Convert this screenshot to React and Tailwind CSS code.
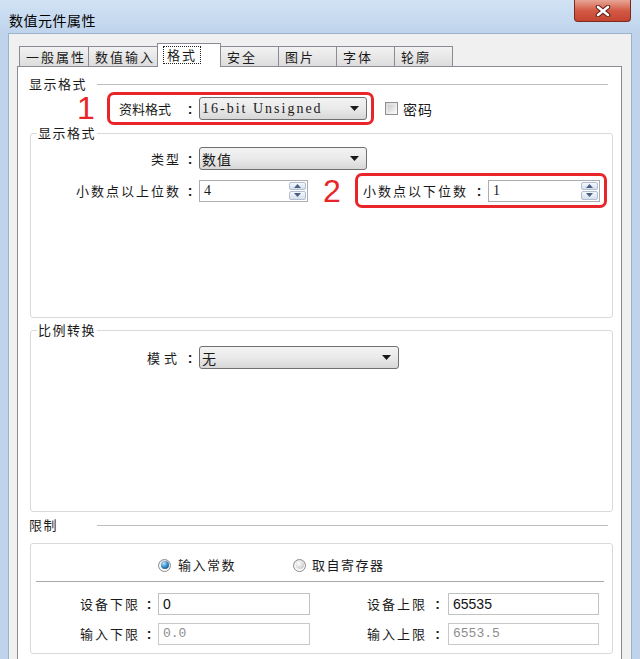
import React from "react";

// Win7 style "数值元件属性" dialog, 格式 tab

const TABS = ["一般属性", "数值输入", "格式", "安全", "图片", "字体", "轮廓"];
const TAB_WIDTHS = ["w-[70px]", "w-[70px]", "w-[64px]", "w-[59px]", "w-[59px]", "w-[59px]", "w-[59px]"];

function Colon({ w = "w-[18px]" }) {
  return (
    <span className={`${w} shrink-0 text-center text-[14px] font-bold leading-[16px] [font-family:'Liberation_Sans',sans-serif]`}>
      :
    </span>
  );
}

function Arrow() {
  return (
    <svg width="9" height="5" viewBox="0 0 9 5" className="shrink-0">
      <path d="M0 0 H9 L4.5 5 Z" fill="#1a1a1a" />
    </svg>
  );
}

function Dropdown({ w, children, mono }) {
  return (
    <div
      className={`${w} h-[23px] shrink-0 rounded-[3px] border border-[#707070] bg-gradient-to-b from-[#f3f3f3] via-[#eaeaea] to-[#d7d7d7] flex items-center pl-[2px] pr-[7px]`}
    >
      <span
        className={
          mono
            ? "flex-1 text-[14px] leading-[16px] tracking-[2px] [font-family:'Liberation_Serif',serif]"
            : "flex-1 text-[14px] leading-[16px] tracking-[1px]"
        }
      >
        {children}
      </span>
      <Arrow />
    </div>
  );
}

function SpinButton({ up }) {
  return (
    <div className="flex-1 rounded-[2px] border border-[#b3bfd0] bg-gradient-to-b from-[#f5f8fc] to-[#d6e0ed] flex items-center justify-center">
      <svg width="7" height="4" viewBox="0 0 7 4">
        <path d={up ? "M0 4 L3.5 0 L7 4 Z" : "M0 0 H7 L3.5 4 Z"} fill="#4b5f80" />
      </svg>
    </div>
  );
}

function SpinField({ w, value }) {
  return (
    <div className={`${w} h-[22px] shrink-0 border border-[#abadb3] bg-white flex items-stretch`}>
      <span className="flex-1 pl-[4px] self-center text-[14px] leading-[16px] [font-family:'Liberation_Serif',serif]">
        {value}
      </span>
      <div className="w-[19px] flex flex-col gap-px p-px">
        <SpinButton up />
        <SpinButton />
      </div>
    </div>
  );
}

function TextField({ w, value, disabled }) {
  return (
    <div
      className={
        disabled
          ? `${w} h-[22px] shrink-0 border border-[#c9c9c9] bg-white flex items-center pl-[4px] text-[13px] text-[#8d8d8d] [font-family:'Liberation_Mono',monospace]`
          : `${w} h-[22px] shrink-0 border border-[#c2c2c2] bg-white flex items-center pl-[4px] text-[14px] text-[#111] [font-family:'Liberation_Sans',sans-serif]`
      }
    >
      {value}
    </div>
  );
}

function Header({ children }) {
  return (
    <div className="flex items-center h-[16px] pl-[11px] pr-[13px]">
      <span className="w-[68px] shrink-0 text-[13px] leading-[16px] tracking-[1.5px]">{children}</span>
      <div className="flex-1 h-px bg-[#bdbdbd]" />
    </div>
  );
}

function RedDigit({ children }) {
  return (
    <span className="block text-[32px] leading-[28px] text-[#e8262a] [font-family:'Liberation_Sans',sans-serif]">
      {children}
    </span>
  );
}

function Radio({ checked }) {
  return (
    <div className="w-[13px] h-[13px] shrink-0 rounded-full border border-[#8b8b8b] bg-gradient-to-b from-[#e4e4e4] to-[#ffffff] flex items-center justify-center">
      {checked ? (
        <div className="w-[8px] h-[8px] rounded-full bg-[radial-gradient(circle_at_35%_30%,#bfe6fb,#2f88c6_50%,#0b3e6e)]" />
      ) : (
        <div className="w-[8px] h-[8px] rounded-full bg-[radial-gradient(circle_at_35%_30%,#ffffff,#d6d6d6_60%,#bcbcbc)]" />
      )}
    </div>
  );
}

function CloseButton() {
  return (
    <div className="absolute right-[9px] top-0 w-[57px] h-[22px] rounded-b-[4px] border border-t-0 border-[#7a2a1e] bg-gradient-to-b from-[#e6a595] via-[#d35a45] to-[#c54432] flex items-center justify-center">
      <svg width="16" height="12" viewBox="0 0 16 12">
        <path d="M3 2 L13 10 M13 2 L3 10" stroke="#5a1c13" strokeWidth="4.5" strokeLinecap="round" />
        <path d="M3 2 L13 10 M13 2 L3 10" stroke="#ffffff" strokeWidth="2.6" strokeLinecap="round" />
      </svg>
    </div>
  );
}

export default function App() {
  return (
    <div className="w-[640px] h-[659px] overflow-hidden relative bg-[#bfd4ec] text-[#1a1a1a] [font-family:'Noto_Sans_CJK_SC','Noto_Sans',sans-serif]">
      <div className="h-[33px] flex items-center pl-[9px] pt-[7px] bg-gradient-to-b from-[#d2e2f4] to-[#bed4ec]">
        <span className="text-[14px] leading-[18px] tracking-[0.5px] text-black">数值元件属性</span>
      </div>
      <CloseButton />

      <div className="ml-[8px] w-[624px] h-[626px] bg-[#f0f0f0] border-t border-x border-[#9cb1ca]">
        {/* tabs */}
        <div className="h-[32px] flex items-end pl-[10px]">
          {TABS.map((t, i) =>
            i === 2 ? (
              <div
                key={t}
                className={`${TAB_WIDTHS[i]} -ml-px -mb-px h-[24px] relative z-10 bg-white border-t border-x border-[#898c95] flex items-start pt-[2px] pl-[5px]`}
              >
                <span className="border border-dotted border-[#222] px-[3px] text-[13px] leading-[16px] tracking-[2px]">
                  {t}
                </span>
              </div>
            ) : (
              <div
                key={t}
                className={`${TAB_WIDTHS[i]} ${i === 0 ? "" : "-ml-px"} h-[20px] border-t border-x border-[#898c95] bg-gradient-to-b from-[#f2f2f2] to-[#dddddd] flex items-center pl-[6px]`}
              >
                <span className="text-[13px] leading-[16px] tracking-[2px]">{t}</span>
              </div>
            )
          )}
        </div>

        {/* page */}
        <div className="ml-[8px] w-[605px] h-[600px] border border-[#898c95] bg-white">
          <div className="h-[9px]" />
          <Header>显示格式</Header>

          <div className="flex items-center h-[33px]">
            <div className="w-[89px] shrink-0 pl-[59px] pb-[1px]">
              <RedDigit>1</RedDigit>
            </div>
            <div className="w-[267px] h-[33px] shrink-0 rounded-[7px] border-[3px] border-[#e8262a] flex items-center pl-[9px]">
              <span className="w-[62px] shrink-0 text-[13px] leading-[16px]">资料格式</span>
              <Colon />
              <Dropdown w="w-[168px]" mono>
                16-bit Unsigned
              </Dropdown>
            </div>
            <div className="ml-[11px] w-[13px] h-[13px] border border-[#8e8f8f] bg-gradient-to-br from-[#d9d9d9] to-[#fbfbfb] p-[2px]">
              <div className="w-full h-full bg-gradient-to-br from-[#cdcdcd] to-[#f3f3f3]" />
            </div>
            <span className="ml-[5px] text-[14px] leading-[16px] tracking-[1px]">密码</span>
          </div>

          <fieldset className="ml-[12px] w-[583px] h-[193px] border border-[#d9d9d9] rounded-[3px]">
            <legend className="ml-[6px] px-[1px] text-[13px] leading-[16px] tracking-[1.5px]">显示格式</legend>
            <div className="flex items-center mt-[6px] h-[23px]">
              <span className="w-[150px] shrink-0 text-right text-[13px] leading-[16px] tracking-[2px]">类型</span>
              <Colon />
              <Dropdown w="w-[168px]">数值</Dropdown>
            </div>
            <div className="flex items-center mt-[3px] h-[35px]">
              <span className="w-[150px] shrink-0 text-right text-[13px] leading-[16px] tracking-[2px]">
                小数点以上位数
              </span>
              <Colon />
              <SpinField w="w-[109px]" value="4" />
              <div className="w-[47px] shrink-0 pl-[15px]">
                <RedDigit>2</RedDigit>
              </div>
              <div className="w-[252px] h-[35px] shrink-0 rounded-[7px] border-[3px] border-[#e8262a] flex items-center pl-[5px]">
                <span className="w-[107px] shrink-0 text-[13px] leading-[16px] tracking-[2px]">小数点以下位数</span>
                <Colon />
                <SpinField w="w-[112px]" value="1" />
              </div>
            </div>
          </fieldset>

          <fieldset className="mt-[4px] ml-[12px] w-[583px] h-[190px] border border-[#d9d9d9] rounded-[3px]">
            <legend className="ml-[6px] px-[1px] text-[13px] leading-[16px] tracking-[1.5px]">比例转换</legend>
            <div className="flex items-center mt-[8px] h-[23px]">
              <span className="w-[150px] shrink-0 text-right text-[13px] leading-[16px] tracking-[4px]">模式</span>
              <Colon />
              <Dropdown w="w-[200px]">无</Dropdown>
            </div>
          </fieldset>

          <div className="h-[5px]" />
          <Header>限制</Header>

          <div className="mt-[10px] ml-[12px] w-[583px] h-[111px] border border-[#d9d9d9] rounded-[3px]">
            <div className="mt-[13px] h-[16px] flex items-center">
              <div className="ml-[127px]">
                <Radio checked />
              </div>
              <span className="ml-[7px] text-[13px] leading-[16px] tracking-[1.5px]">输入常数</span>
              <div className="ml-[57px]">
                <Radio />
              </div>
              <span className="ml-[6px] text-[13px] leading-[16px] tracking-[1.5px]">取自寄存器</span>
            </div>
            <div className="mt-[8px] ml-[5px] w-[568px] h-[2px] border-t border-[#a9a9a9] border-b border-b-white" />
            <div className="mt-[10px] h-[22px] flex items-center">
              <span className="w-[109px] shrink-0 text-right text-[13px] leading-[16px] tracking-[2px]">设备下限</span>
              <Colon />
              <TextField w="w-[152px]" value="0" />
              <span className="w-[117px] shrink-0 text-right text-[13px] leading-[16px] tracking-[2px]">设备上限</span>
              <Colon w="w-[21px]" />
              <TextField w="w-[151px]" value="65535" />
            </div>
            <div className="mt-[8px] h-[22px] flex items-center">
              <span className="w-[109px] shrink-0 text-right text-[13px] leading-[16px] tracking-[2px]">输入下限</span>
              <Colon />
              <TextField w="w-[152px]" value="0.0" disabled />
              <span className="w-[117px] shrink-0 text-right text-[13px] leading-[16px] tracking-[2px]">输入上限</span>
              <Colon w="w-[21px]" />
              <TextField w="w-[151px]" value="6553.5" disabled />
            </div>
          </div>
        </div>
      </div>
    </div>
  );
}
